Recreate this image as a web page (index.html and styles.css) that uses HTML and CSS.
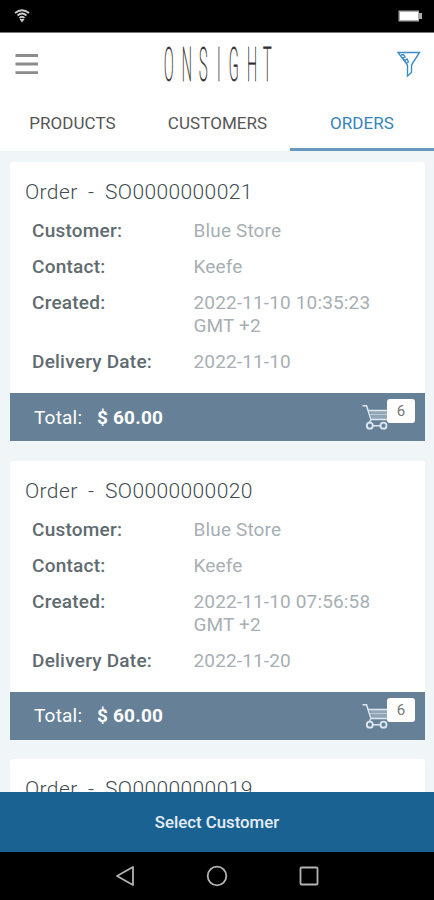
FILE: index.html
```html
<!DOCTYPE html>
<html lang="en">
<head>
<meta charset="utf-8">
<title>Onsight – Orders</title>
<link rel="stylesheet" href="styles.css">
</head>
<body>
<svg class="defs" width="0" height="0" aria-hidden="true">
  <symbol id="cart" viewBox="0 0 28 28">
    <path d="M8 7.500H28V16.500H10Z" fill="#91a6b7"/>
    <path d="M.5 2.800H4.500L9 16.500L7 20M9 16.500H27M6.500 7.500H27M11 22.700H18" fill="none" stroke="#dfe7f3" stroke-width="1.500"/>
    <path d="M8 11.500H27" stroke="#bdcad6" stroke-width="1"/>
    <circle cx="7.800" cy="22.700" r="3" fill="#668197" stroke="#dfe7f3" stroke-width="1.800"/>
    <circle cx="21.500" cy="22.700" r="3" fill="#668197" stroke="#dfe7f3" stroke-width="1.800"/>
  </symbol>
</svg>
<div class="phone">
  <div class="status">
    <svg width="16" height="14" viewBox="0 0 16 14" fill="none" stroke="#ccc" stroke-width="1.800"><path d="M1 4Q8-1.500 15 4M3.500 6.500Q8 2.500 12.500 6.500M5.500 9Q8 6.500 10.500 9"/><path d="M8 13.500L5.500 10H10.500Z" fill="#ccc" stroke="none"/></svg>
    <svg width="25" height="12" viewBox="0 0 25 12"><path d="M.5.5H21V3H24V9H21V11.500H.5Z" fill="#aaa"/><path d="M2 2H20V10H2Z" fill="#fff"/></svg>
  </div>
  <header class="header">
    <svg width="24" height="24" viewBox="0 0 24 24" stroke="#8c8c8c" stroke-width="2.800"><path d="M.5 3.500H23M.5 12H23M.5 20.700H23"/></svg>
    <svg class="logo" width="112" height="58" viewBox="0 0 112 58"><text transform="translate(1 46) scale(.3 1)" x="0 59 117 177 216 277 330">ONSIGHT</text></svg>
    <svg width="24" height="27" viewBox="0 0 24 27" fill="none" stroke="#3c8cc4" stroke-width="1.400"><path d="M1 1.500H22.500L14.500 14V21.500L10.500 25V14Z"/><path d="M4 4L6.500 3.500L8 6L5.500 7L8 9.500L10 8L11.500 11L9 12"/></svg>
  </header>
  <nav class="tabs"><a>PRODUCTS</a><a>CUSTOMERS</a><a class="active">ORDERS</a></nav>
  <main class="list">
    <article class="card">
      <h2><span>Order</span><span>-</span><span>SO0000000021</span></h2>
      <dl><dt>Customer:</dt><dd>Blue Store</dd><dt>Contact:</dt><dd>Keefe</dd><dt>Created:</dt><dd>2022-11-10 10:35:23<br>GMT +2</dd><dt>Delivery Date:</dt><dd>2022-11-10</dd></dl>
      <footer><span class="label">Total:</span><b>$ 60.00</b><span class="cart"><svg width="28" height="28"><use href="#cart"/></svg><span class="badge">6</span></span></footer>
    </article>
    <article class="card">
      <h2><span>Order</span><span>-</span><span>SO0000000020</span></h2>
      <dl><dt>Customer:</dt><dd>Blue Store</dd><dt>Contact:</dt><dd>Keefe</dd><dt>Created:</dt><dd>2022-11-10 07:56:58<br>GMT +2</dd><dt>Delivery Date:</dt><dd>2022-11-20</dd></dl>
      <footer><span class="label">Total:</span><b>$ 60.00</b><span class="cart"><svg width="28" height="28"><use href="#cart"/></svg><span class="badge">6</span></span></footer>
    </article>
    <article class="card">
      <h2><span>Order</span><span>-</span><span>SO0000000019</span></h2>
    </article>
  </main>
  <button class="select">Select Customer</button>
  <div class="system">
    <svg width="22" height="24" viewBox="0 0 22 24"><path d="M3 12L19 3V21Z"/></svg>
    <svg width="24" height="24" viewBox="0 0 24 24"><circle cx="12" cy="12" r="9.300"/></svg>
    <svg width="22" height="24" viewBox="0 0 22 24"><rect x="2.500" y="3.500" width="17" height="17" rx="1"/></svg>
  </div>
</div>
</body>
</html>
```
FILE: styles.css
```css
* { box-sizing: border-box; }
body { margin: 0; font-family: Roboto, "Liberation Sans", sans-serif; }
svg { display: block; flex: none; }
.defs { position: absolute; }
.phone { width: 434px; height: 900px; display: flex; flex-direction: column; overflow: hidden; background: #f0f5f8; }
.status { height: 33px; flex: none; background: #000; border-bottom: 1px solid #777; display: flex; align-items: center; justify-content: space-between; padding: 0 11px 0 14px; }
.header { height: 62px; flex: none; background: #fff; display: flex; align-items: center; justify-content: space-between; padding: 0 13px 0 15px; }
.logo { margin-left: 2px; overflow: visible; opacity: .99; }
.logo text { font-family: Roboto, sans-serif; font-size: 48px; font-weight: 100; fill: #222; stroke: #333; stroke-width: .8px; }
.tabs { height: 56px; flex: none; background: #fff; display: grid; grid-template-columns: 145px 145px 144px; }
.tabs a { display: flex; align-items: center; justify-content: center; padding-top: 3px; font-size: 17px; letter-spacing: .05px; color: #555; border-bottom: 3px solid transparent; }
.tabs .active { color: #3583bd; border-bottom-color: #6799c0; }
.list { height: 641px; flex: none; overflow: hidden; padding: 11px 9px 0 10px; }
.card { height: 279px; margin-bottom: 19.500px; background: #fff; border-radius: 3px 3px 0 0; display: flex; flex-direction: column; }
.card h2 { margin: 0; padding: 17px 15px 0; display: flex; gap: 10.500px; font-size: 21px; letter-spacing: .38px; line-height: 26px; font-weight: 300; color: #414c52; white-space: nowrap; }
dl { margin: 14px 0 0; padding-left: 22px; display: grid; grid-template-columns: 161.500px 1fr; row-gap: 13px; font-size: 19px; letter-spacing: .15px; line-height: 23px; }
dt { font-weight: 500; letter-spacing: .23px; color: #606b70; white-space: nowrap; }
dd { margin: 0; color: #a7afb4; font-weight: 400; white-space: nowrap; }
.card footer { height: 48px; margin-top: auto; background: #668197; color: #fff; display: flex; align-items: center; padding: 0 10px 0 24px; font-size: 19px; letter-spacing: .2px; }
.label { width: 63px; }
.card b { font-weight: 700; }
.cart { position: relative; margin-left: auto; width: 53px; height: 28px; }
.badge { position: absolute; right: 0; top: -4px; width: 28px; height: 24px; border-radius: 3px; background: #fff; color: #777; font-size: 15px; line-height: 25px; text-align: center; }
.select { height: 60px; flex: none; border: 0; padding: 0; background: #196292; color: #e6eefa; font: 500 16.800px Roboto, sans-serif; }
.system { flex: 1; background: #000; display: flex; align-items: center; justify-content: center; gap: 69px; }
.system svg { fill: none; stroke: #b3b3b3; stroke-width: 1.800; stroke-linejoin: round; }
```
